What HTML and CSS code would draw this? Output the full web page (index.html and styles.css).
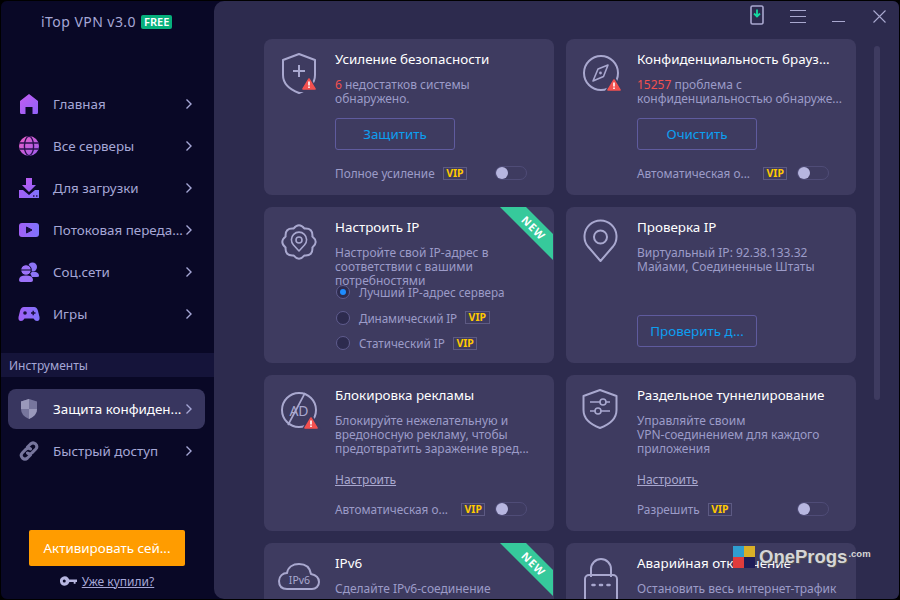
FILE: index.html
```html
<!DOCTYPE html>
<html lang="ru">
<head>
<meta charset="utf-8">
<title>iTop VPN</title>
<link rel="stylesheet" href="styles.css">
</head>
<body>
<svg class="defs" width="0" height="0">
  <defs>
    <linearGradient id="pv" x1="0" y1="0" x2="1" y2="1"><stop offset="0" stop-color="#c45cf2"/><stop offset="1" stop-color="#8f62f7"/></linearGradient>
    <linearGradient id="mg" x1="0" y1="0" x2="1" y2="1"><stop offset="0" stop-color="#f05fc4"/><stop offset="1" stop-color="#9a5cf0"/></linearGradient>
    <linearGradient id="bl" x1="0" y1="0" x2="1" y2="0"><stop offset="0" stop-color="#a15ff6"/><stop offset="1" stop-color="#7f74fb"/></linearGradient>
    <symbol id="warn" viewBox="0 0 14 12">
      <path d="M7 1 L13 11 H1 Z" fill="#f2504f" stroke="#f2504f" stroke-width="1.6" stroke-linejoin="round"/>
      <path d="M7 3.4 V7.4 M7 8.6 V10" stroke="#fff" stroke-width="1.6"/>
    </symbol>
  </defs>
</svg>
<div class="app">
  <aside class="sidebar">
    <div class="brand"><span class="brand-name">iTop VPN v3.0</span><span class="free">FREE</span></div>
    <nav class="nav">
      <a class="nav-item"><svg class="nav-icon" viewBox="0 0 22 22"><path d="M11 1 L20 8 V19.5 Q20 21 18.5 21 H14.5 V14 H7.5 V21 H3.5 Q2 21 2 19.5 V8 Z" fill="url(#pv)"/></svg><span class="nav-label">Главная</span><svg class="chev" viewBox="0 0 8 12"><path d="M1.5 1.5 L6 6 L1.5 10.5"/></svg></a>
      <a class="nav-item"><svg class="nav-icon" viewBox="0 0 22 22"><circle cx="11" cy="11" r="10" fill="url(#mg)"/><g fill="none" stroke="#2a1250" stroke-width="1.4"><ellipse cx="11" cy="11" rx="4.6" ry="9.6"/><path d="M1.5 8 H20.5 M1.5 14 H20.5"/></g></svg><span class="nav-label">Все серверы</span><svg class="chev" viewBox="0 0 8 12"><path d="M1.5 1.5 L6 6 L1.5 10.5"/></svg></a>
      <a class="nav-item"><svg class="nav-icon" viewBox="0 0 22 22"><path d="M8 1 H14 V8 H18 L11 15 L4 8 H8 Z" fill="url(#pv)"/><path d="M1 13 H5 L11 18 L17 13 H21 V21 H1 Z" fill="url(#bl)"/><path d="M15 19 H16.5 M18 19 H19.5" stroke="#2a1250" stroke-width="1.4"/></svg><span class="nav-label">Для загрузки</span><svg class="chev" viewBox="0 0 8 12"><path d="M1.5 1.5 L6 6 L1.5 10.5"/></svg></a>
      <a class="nav-item"><svg class="nav-icon" viewBox="0 0 22 22"><rect x="1" y="4" width="20" height="14" rx="3" fill="url(#bl)"/><path d="M8.5 8 L14 11 L8.5 14 Z" fill="#150d3c" stroke="#150d3c" stroke-linejoin="round"/></svg><span class="nav-label">Потоковая переда...</span><svg class="chev" viewBox="0 0 8 12"><path d="M1.5 1.5 L6 6 L1.5 10.5"/></svg></a>
      <a class="nav-item"><svg class="nav-icon" viewBox="0 0 22 22"><circle cx="14.5" cy="6" r="4.5" fill="#8d75f6"/><path d="M12 12 Q15 10 18 11 Q21 12 21 15 Q21 16 19 16 H14 Z" fill="#8d75f6"/><circle cx="8" cy="9" r="5.3" fill="#9c72f8" stroke="#090826"/><path d="M3 9 H13" stroke="#090826"/><path d="M1 19 Q1 14.6 8 14.6 Q15 14.6 15 19 Q15 21 13 21 H3 Q1 21 1 19 Z" fill="#9c72f8"/></svg><span class="nav-label">Соц.сети</span><svg class="chev" viewBox="0 0 8 12"><path d="M1.5 1.5 L6 6 L1.5 10.5"/></svg></a>
      <a class="nav-item"><svg class="nav-icon" viewBox="0 0 22 22"><path d="M6 4 H16 Q19 4 20 8 L21.5 14 Q22 18 19 18 Q17 18 15.5 15.5 H6.5 Q5 18 3 18 Q0 18 .5 14 L2 8 Q3 4 6 4 Z" fill="url(#bl)"/><circle cx="7" cy="10" r="1.8" fill="#150d3c"/><path d="M13 10 H17.5 M15.2 7.8 V12.2" stroke="#150d3c" stroke-width="1.4"/></svg><span class="nav-label">Игры</span><svg class="chev" viewBox="0 0 8 12"><path d="M1.5 1.5 L6 6 L1.5 10.5"/></svg></a>
    </nav>
    <div class="tools-head">Инструменты</div>
    <nav class="nav">
      <a class="nav-item active"><svg class="nav-icon" viewBox="0 0 22 22"><path d="M11 1 L19 3.5 V11 Q19 17.5 11 21 Q3 17.5 3 11 V3.5 Z" fill="#77769d"/><path d="M11 1 V11 H3 V3.5 Z M11 11 H19 Q19 17.5 11 21 Z" fill="#9a99bb"/></svg><span class="nav-label">Защита конфиден...</span><svg class="chev" viewBox="0 0 8 12"><path d="M1.5 1.5 L6 6 L1.5 10.5"/></svg></a>
      <a class="nav-item"><svg class="nav-icon" viewBox="0 0 22 22"><g fill="none" stroke="#77769d" stroke-width="3" stroke-linecap="round"><path d="M9.5 7 L12.5 4 Q15 1.8 17.6 4 Q20 6.6 17.8 9 L14 12.8 Q11.6 14.8 9.5 13"/><path d="M12.5 15 L9.5 18 Q7 20.2 4.4 18 Q2 15.4 4.2 13 L8 9.2 Q10.4 7.2 12.5 9"/></g></svg><span class="nav-label">Быстрый доступ</span><svg class="chev" viewBox="0 0 8 12"><path d="M1.5 1.5 L6 6 L1.5 10.5"/></svg></a>
    </nav>
    <div class="side-foot">
      <button class="activate">Активировать сей...</button>
      <div class="bought">
        <svg class="key" viewBox="0 0 18 10"><path d="M5 0 A5 5 0 1 1 5 10 A5 5 0 0 1 3 0.4 Z M9.5 3.5 H18 V6 H16.5 V8 H14.5 V6 H9.5 Z" fill="#b7b6e0"/><circle cx="4.5" cy="5" r="1.6" fill="#090826"/></svg>
        <a class="bought-link">Уже купили?</a>
      </div>
    </div>
  </aside>
  <main class="main">
    <header class="topbar">
      <svg class="tb tb-phone" viewBox="0 0 14 20"><rect x="1" y="1" width="12" height="18" rx="1.5" fill="none" stroke="#a9a8cf" stroke-width="1.6"/><path d="M7 4.5 V11 M4 8.5 L7 11.5 L10 8.5" fill="none" stroke="#14d8a0" stroke-width="1.8"/></svg>
      <svg class="tb tb-menu" viewBox="0 0 16 13"><path d="M0 .5 H16 M0 6.5 H16 M0 12.5 H16" stroke="#a9a8cf"/></svg>
      <svg class="tb tb-min" viewBox="0 0 13 13"><path d="M0 11.5 H13" stroke="#a9a8cf"/></svg>
      <svg class="tb tb-close" viewBox="0 0 13 13"><path d="M.5 .5 L12.5 12.5 M12.5 .5 L.5 12.5" stroke="#a9a8cf" stroke-width="1.1"/></svg>
    </header>
    <div class="scroll">
      <div class="grid">

        <section class="card">
          <svg class="card-icon" viewBox="0 0 48 48"><path d="M23 3 L39 9 V24 C39 33 31 39 23 42 C15 39 7 33 7 24 V9 Z" class="ln"/><path d="M23 14 V26 M17 20 H29" class="ln"/><path d="M33 24 L43 41 H23 Z" fill="#3e3b60"/><use href="#warn" x="26" y="27" width="14" height="12"/></svg>
          <div class="card-body">
            <h3 class="card-title">Усиление безопасности</h3>
            <p class="desc"><span class="red">6</span> недостатков системы<br>обнаружено.</p>
            <button class="btn btn-top">Защитить</button>
            <div class="foot"><span>Полное усиление</span><span class="vip">VIP</span><span class="toggle"></span></div>
          </div>
        </section>

        <section class="card">
          <svg class="card-icon" viewBox="0 0 48 48"><circle cx="23" cy="22" r="17" class="ln"/><path d="M30 14 L25.5 25.5 L15 30 L20 18 Z" class="ln thin"/><circle cx="22.5" cy="22" r="1.4" fill="#a9a8cf"/><path d="M36 24 L46 42 H26 Z" fill="#3e3b60"/><use href="#warn" x="29" y="28" width="14" height="12"/></svg>
          <div class="card-body">
            <h3 class="card-title">Конфиденциальность брауз...</h3>
            <p class="desc"><span class="red">15257</span> проблема с<br>конфиденциальностью обнаруже...</p>
            <button class="btn btn-top">Очистить</button>
            <div class="foot"><span class="foot-clip">Автоматическая о...</span><span class="vip">VIP</span><span class="toggle"></span></div>
          </div>
        </section>

        <section class="card">
          <svg class="card-icon" viewBox="0 0 48 48"><path d="M17.5 9.6 Q23 3 28.5 9.6 Q37.1 8.9 36.4 17.5 Q43 23 36.4 28.5 Q37.1 37.1 28.5 36.4 Q23 43 17.5 36.4 Q8.9 37.1 9.6 28.5 Q3 23 9.6 17.5 Q8.9 8.9 17.5 9.6 Z" class="ln"/><path d="M23 32 L17.5 26 A7.6 7.6 0 1 1 28.5 26 Z" class="ln thin"/><circle cx="23" cy="21" r="3" class="ln thin"/></svg>
          <div class="card-body">
            <h3 class="card-title">Настроить IP</h3>
            <p class="desc">Настройте свой IP-адрес в соответствии с вашими потребностями</p>
            <div class="radios">
              <label class="radio"><span class="dot on"></span><span>Лучший IP-адрес сервера</span></label>
              <label class="radio"><span class="dot"></span><span class="radio-dyn">Динамический IP</span><span class="vip">VIP</span></label>
              <label class="radio"><span class="dot"></span><span>Статический IP</span><span class="vip">VIP</span></label>
            </div>
          </div>
          <svg class="ribbon" viewBox="0 0 54 54"><path d="M0 0 H26 L53 27 V53 Z" fill="#36c99b"/><text class="ribbon-text" x="33.5" y="25" transform="rotate(45 33.5 21)" text-anchor="middle">NEW</text></svg>
        </section>

        <section class="card">
          <svg class="card-icon" viewBox="0 0 48 48"><path d="M22.5 42 L10 27.5 A16 16 0 1 1 35 27.5 Z" class="ln"/><circle cx="22.5" cy="18" r="6.5" class="ln"/></svg>
          <div class="card-body">
            <h3 class="card-title">Проверка IP</h3>
            <p class="desc">Виртуальный IP: 92.38.133.32<br>Майами, Соединенные Штаты</p>
            <button class="btn btn-low">Проверить д...</button>
          </div>
        </section>

        <section class="card">
          <svg class="card-icon" viewBox="0 0 48 48"><circle cx="23" cy="23" r="17" class="ln"/><text class="ad" x="23" y="29" text-anchor="middle">AD</text><path d="M29 6 L12 38" class="ln thin"/><path d="M35 26 L46 44 H25 Z" fill="#3e3b60"/><use href="#warn" x="28" y="30" width="14" height="12"/></svg>
          <div class="card-body">
            <h3 class="card-title">Блокировка рекламы</h3>
            <p class="desc">Блокируйте нежелательную и<br>вредоносную рекламу, чтобы<br>предотвратить заражение вред...</p>
            <a class="cfg">Настроить</a>
            <div class="foot"><span class="foot-clip">Автоматическая о...</span><span class="vip">VIP</span><span class="toggle"></span></div>
          </div>
        </section>

        <section class="card">
          <svg class="card-icon" viewBox="0 0 48 48"><path d="M22 3 L38.500 9 V23 C38.500 32 30 38 22 41 C14 38 5.500 32 5.500 23 V9 Z" class="ln"/><path d="M12 15 H32 M12 24 H32" class="ln thin"/><circle cx="25" cy="15" r="3" fill="#3e3b60" stroke="#a9a8cf" stroke-width="1.6"/><circle cx="20" cy="24" r="3" fill="#3e3b60" stroke="#a9a8cf" stroke-width="1.6"/></svg>
          <div class="card-body">
            <h3 class="card-title">Раздельное туннелирование</h3>
            <p class="desc">Управляйте своим<br>VPN-соединением для каждого<br>приложения</p>
            <a class="cfg">Настроить</a>
            <div class="foot"><span>Разрешить</span><span class="vip">VIP</span><span class="toggle"></span></div>
          </div>
        </section>

        <section class="card">
          <svg class="card-icon" viewBox="0 0 48 48"><path d="M11 34 C5 34 3 30 3 26 C3 21 7 18 11 18 C12 12 17 9 23 9 C30 9 34 13 35 19 C40 20 43 23 43 27 C43 31 40 34 36 34 Z" class="ln"/><text class="ipv6" x="23.500" y="29" text-anchor="middle">IPv6</text></svg>
          <div class="card-body">
            <h3 class="card-title">IPv6</h3>
            <p class="desc">Сделайте IPv6-соединение</p>
          </div>
          <svg class="ribbon" viewBox="0 0 54 54"><path d="M0 0 H26 L53 27 V53 Z" fill="#36c99b"/><text class="ribbon-text" x="33.5" y="25" transform="rotate(45 33.5 21)" text-anchor="middle">NEW</text></svg>
        </section>

        <section class="card">
          <svg class="card-icon" viewBox="0 0 48 48"><path d="M13 22 V14 A10 10 0 0 1 33 14 V22" class="ln"/><rect x="7" y="20" width="32" height="30" rx="4" class="ln"/><path d="M14.500 30 h2 M22 30 h2 M29.500 30 h2" stroke="#a9a8cf" stroke-width="2.600" stroke-linecap="round"/></svg>
          <div class="card-body">
            <h3 class="card-title">Аварийная отключение</h3>
            <p class="desc">Остановить весь интернет-трафик</p>
          </div>
        </section>

      </div>
      <div class="scrollbar"></div>
    </div>
    <div class="watermark">
      <span class="wm-logo"><i class="wm-b"></i><i class="wm-y"></i><i class="wm-r"></i><i class="wm-n"></i></span>
      <span class="wm-name">OneProgs</span><span class="wm-com">.com</span>
    </div>
  </main>
</div>
</body>
</html>
```
FILE: styles.css
```css
* { box-sizing: border-box; }
html, body { margin: 0; height: 100%; }
body { width: 900px; height: 600px; overflow: hidden; background: #000; font-family: "Noto Sans", "Liberation Sans", sans-serif; font-size: 12px; color: #a6a7d6; }
.defs { display: block; height: 0; }
.app { display: flex; width: 900px; height: 600px; border: 1px solid #000; border-radius: 7px; overflow: hidden; background: #090826; }

.sidebar { display: flex; flex-direction: column; width: 213px; flex: none; height: 100%; }
.brand { display: flex; align-items: center; height: 82px; padding: 0 0 41px 40px; gap: 5px; }
.brand-name { font-size: 14px; letter-spacing: .45px; color: #a6a7d6; }
.free { background: #07b07c; color: #fff; font-size: 11px; font-weight: 600; height: 14px; line-height: 14px; padding: 0 3px; border-radius: 2px; }
.nav { display: flex; flex-direction: column; }
.nav-item { display: flex; align-items: center; height: 42px; margin: 0 9px 0 7px; padding: 0 12px 0 10px; border-radius: 8px; font-size: 13.4px; color: #a6a7d6; }
.nav-item.active { height: 40px; margin-top: 1px; margin-bottom: 1px; background: #38365f; color: #fff; }
.nav-icon { width: 22px; height: 22px; flex: none; }
.nav-label { margin-left: 13px; white-space: nowrap; flex: 1; }
.chev { width: 8px; height: 12px; flex: none; fill: none; stroke: #a6a7d6; stroke-width: 1.4; }
.tools-head { height: 24px; line-height: 25px; margin: 18px 0 11px; padding-left: 8px; background: #15143a; font-size: 12px; color: #a6a7d6; }
.side-foot { margin-top: auto; display: flex; flex-direction: column; align-items: center; padding: 0 1px 10px 0; }
.activate { width: 156px; height: 36px; border: 0; border-radius: 2px; background: #ff9c00; color: #fff; font: inherit; font-size: 13.4px; }
.bought { display: flex; align-items: center; gap: 5px; height: 16px; margin-top: 7px; }
.key { width: 17px; height: 10px; }
.bought-link { font-size: 12px; color: #a6a7d6; text-decoration: underline; }

.main { position: relative; flex: 1; min-width: 0; display: flex; flex-direction: column; background: #2d2b4e; border-radius: 10px 0 0 10px; }
.topbar { flex: none; display: flex; height: 38px; position: relative; }
.tb { position: absolute; }
.tb-phone { left: 536px; top: 4px; width: 14px; height: 20px; }
.tb-menu { left: 576px; top: 9px; width: 16px; height: 13px; }
.tb-min { left: 618px; top: 9px; width: 13px; height: 13px; }
.tb-close { left: 659px; top: 9px; width: 13px; height: 13px; }

.scroll { flex: 1; min-height: 0; display: flex; padding-left: 50px; overflow: hidden; }
.grid { display: grid; grid-template-columns: 290px 290px; grid-auto-rows: 156px; gap: 12px; flex: none; }
.scrollbar { flex: none; width: 6px; height: 354px; margin: 7px 0 0 18px; background: #3e3b60; border-radius: 3px; }

.card { position: relative; display: flex; background: #3e3b60; border-radius: 8px; padding: 12px 0 14px 12px; overflow: hidden; }
.card-icon { width: 48px; height: 48px; flex: none; overflow: hidden; }
.ln { fill: none; stroke: #a9a8cf; stroke-width: 2; stroke-linejoin: round; }
.thin { stroke-width: 1.6; }
.ad { font-size: 14px; fill: #a9a8cf; }
.ipv6 { font-size: 10.5px; fill: #a9a8cf; }
.card-body { flex: 1; min-width: 0; display: flex; flex-direction: column; margin-left: 11px; padding-right: 10px; }
.card-title { margin: 0; font-size: 13.4px; line-height: 16px; font-weight: 400; color: #fff; white-space: nowrap; }
.desc { margin: 11px 0 0; font-size: 12px; line-height: 14px; color: #9c9bc8; }
.red { color: #f2504f; }
.btn { width: 120px; height: 32px; border: 1px solid #5f5b9e; border-radius: 3px; background: transparent; color: #0d9ff0; font: inherit; font-size: 13.4px; }
.btn-top { margin-top: 12px; }
.btn-low { margin-top: 41px; }
.foot { margin-top: auto; display: flex; align-items: center; height: 16px; padding-right: 17px; font-size: 11.8px; color: #9c9bc8; white-space: nowrap; }
.foot-clip { width: 118px; }
.vip { display: inline-block; height: 13px; line-height: 11px; padding: 0 2.5px; margin-left: 8px; border: 1px solid #5d5a83; font-size: 10.5px; font-weight: 700; color: #ffc800; }
.toggle { position: relative; width: 32px; height: 14px; margin-left: auto; border: 1px solid #4f4c77; border-radius: 7px; }
.toggle::before { content: ""; position: absolute; left: 0; top: 0; width: 12px; height: 12px; border-radius: 50%; background: #b7b6e0; }
.radios { display: flex; flex-direction: column; gap: 9.5px; margin-top: -4px; }
.radio { display: flex; align-items: center; height: 16px; font-size: 11.7px; color: #9c9bc8; white-space: nowrap; }
.radio-dyn { letter-spacing: -.1px; }
.dot { position: relative; width: 14px; height: 14px; margin: 0 9px 0 1px; border-radius: 50%; border: 1px solid #5f5c8e; background: #2d2b4e; flex: none; }
.dot.on::before { content: ""; position: absolute; left: 3px; top: 3px; width: 6px; height: 6px; border-radius: 50%; background: #1e8cff; }
.cfg { margin-top: 16px; font-size: 12px; line-height: 16px; color: #a9a8cf; text-decoration: underline; align-self: flex-start; }
.ribbon { position: absolute; right: 0; top: 0; width: 54px; height: 54px; }
.ribbon-text { font-family: "Noto Sans", sans-serif; font-size: 11px; font-weight: 700; letter-spacing: 1px; fill: #fff; }

.watermark { position: absolute; left: 519px; top: 545px; display: flex; align-items: center; height: 22px; }
.wm-logo { display: grid; grid-template-columns: 11px 11px; grid-template-rows: 11px 11px; }
.wm-logo i { display: block; }
.wm-b { background: #2f9ed0; }
.wm-y { background: #d9b028; }
.wm-r { background: #e03c3c; }
.wm-n { background: #1f1d58; }
.wm-name { margin-left: 4px; font-family: "Liberation Sans", sans-serif; font-size: 18.5px; font-weight: 700; color: #d6d6d6; text-shadow: 1px 1px 1px #555; }
.wm-com { margin: -8px 0 0 1px; font-family: "Liberation Sans", sans-serif; font-size: 9.5px; font-weight: 700; color: #d6d6d6; }
```
